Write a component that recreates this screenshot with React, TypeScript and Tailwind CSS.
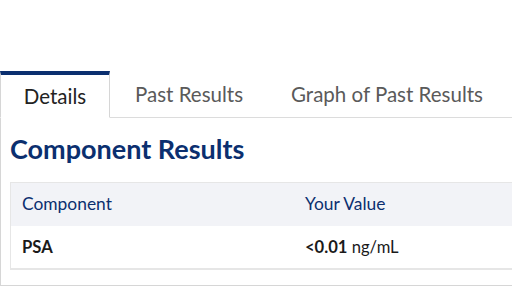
import React from "react";

export default function App() {
  return (
    <div
      className="w-[512px] h-[288px] overflow-hidden bg-white"
      style={{ fontFamily: "Lato, 'Noto Sans', sans-serif" }}
    >
      <div className="h-[71px]" />
      <div className="flex items-stretch border-b border-[#dcdcdc] h-[47px]">
        <div className="w-[110px] shrink-0 border-t-4 border-t-[#0b2f6f] border-l border-r border-[#d6d6d6] border-b border-b-white -mb-px bg-white flex items-center justify-center text-[20.5px] text-[#222]">
          Details
        </div>
        <div className="pl-[25px] pr-6 flex items-center text-[20.5px] text-[#5a5a5a] whitespace-nowrap">
          Past Results
        </div>
        <div className="pl-6 pr-6 flex items-center text-[20.5px] text-[#5a5a5a] whitespace-nowrap">
          Graph of Past Results
        </div>
      </div>
      <div className="border-l border-b border-[#d6d6d6] pl-[9px] h-[168px]">
        <h2 className="pt-[13px] pb-[15px] text-[27px] font-bold text-[#0b2f6f] leading-[36px]">
          Component Results
        </h2>
        <div className="w-[520px] border border-[#e6e6e6] border-b-2">
          <div className="grid grid-cols-[283px_1fr] bg-[#f2f3f7] h-[43px] items-center text-[17.4px] text-[#0b2f6f]">
            <div className="pl-[11px]">Component</div>
            <div className="pl-[11px]">Your Value</div>
          </div>
          <div className="grid grid-cols-[283px_1fr] bg-white h-[42px] items-center text-[16.6px] text-[#1a1a1a]">
            <div className="pl-[11px] font-bold">PSA</div>
            <div className="pl-[11px]">
              <span className="font-bold">&lt;0.01</span> ng/mL
            </div>
          </div>
        </div>
      </div>
    </div>
  );
}
